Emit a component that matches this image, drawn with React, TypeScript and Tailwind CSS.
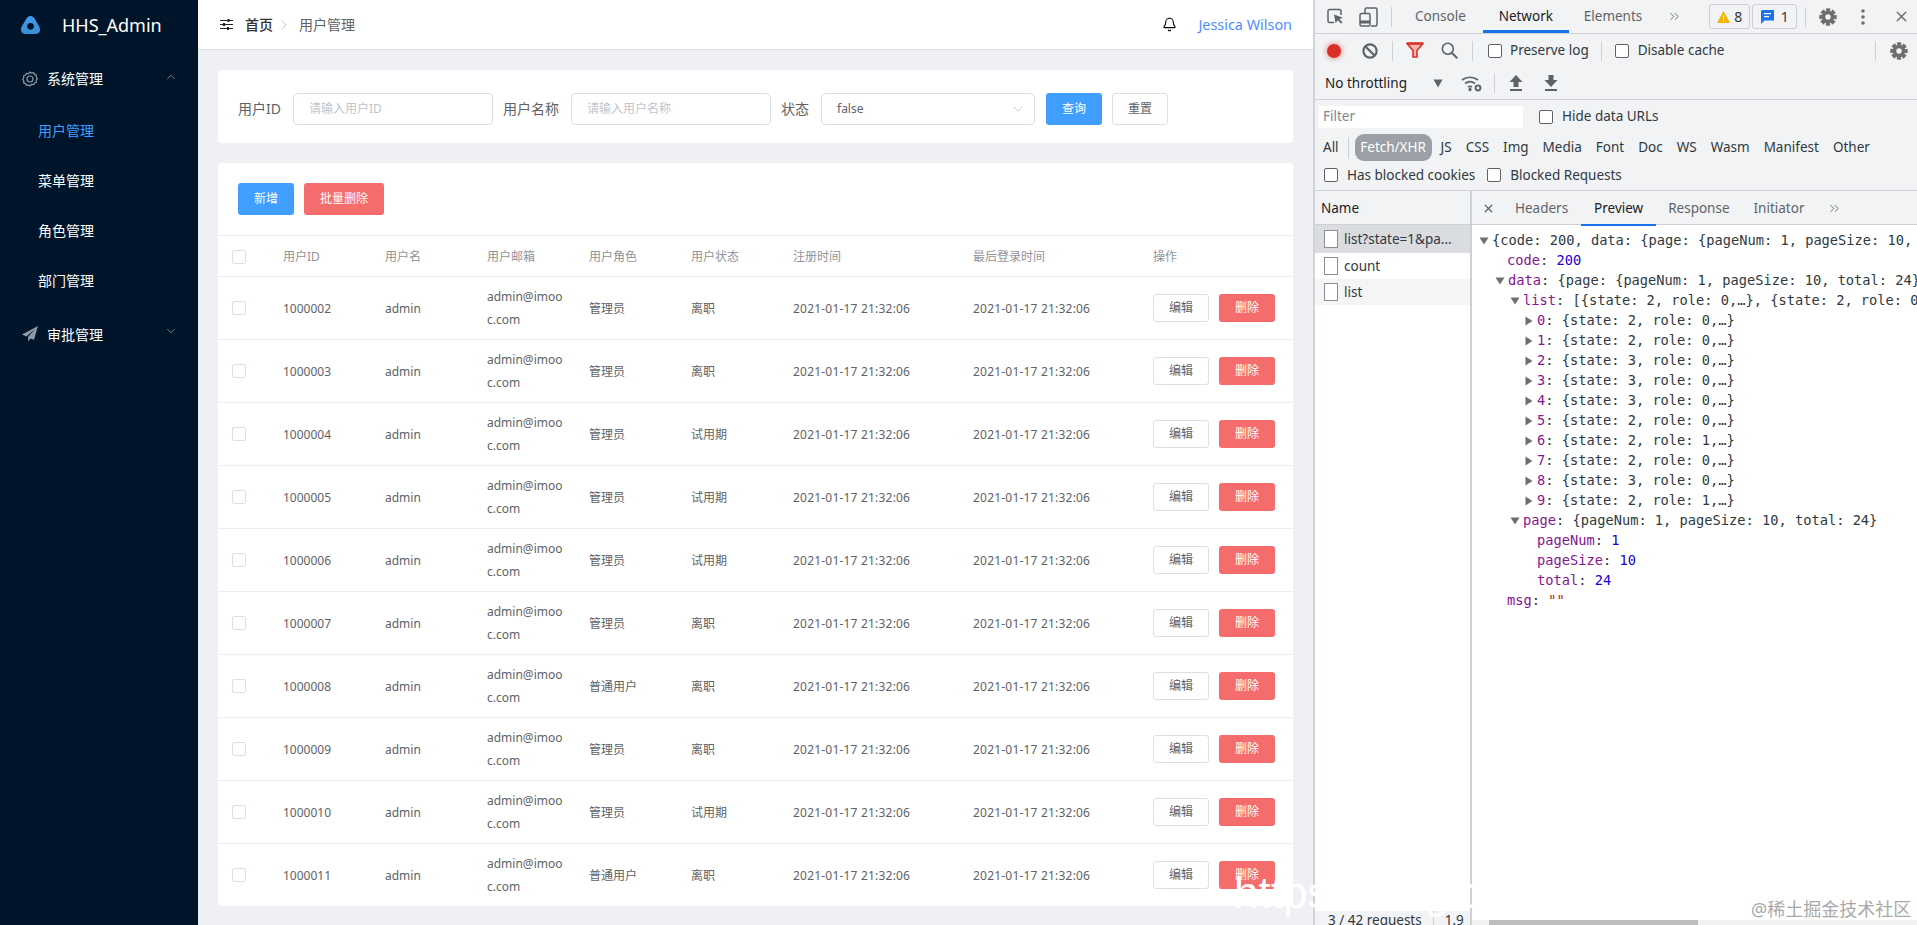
import { Bell, ChevronDown, ChevronRight, ChevronUp, ChevronsRight, X } from "lucide-react";
import type { ReactNode } from "react";

const rows = [
  { id: "1000002", role: "管理员", state: "离职" },
  { id: "1000003", role: "管理员", state: "离职" },
  { id: "1000004", role: "管理员", state: "试用期" },
  { id: "1000005", role: "管理员", state: "试用期" },
  { id: "1000006", role: "管理员", state: "试用期" },
  { id: "1000007", role: "管理员", state: "离职" },
  { id: "1000008", role: "普通用户", state: "离职" },
  { id: "1000009", role: "管理员", state: "离职" },
  { id: "1000010", role: "管理员", state: "试用期" },
  { id: "1000011", role: "普通用户", state: "离职" },
];

const listItems = [
  { k: "0", s: 2, r: 0 },
  { k: "1", s: 2, r: 0 },
  { k: "2", s: 3, r: 0 },
  { k: "3", s: 3, r: 0 },
  { k: "4", s: 3, r: 0 },
  { k: "5", s: 2, r: 0 },
  { k: "6", s: 2, r: 1 },
  { k: "7", s: 2, r: 0 },
  { k: "8", s: 3, r: 0 },
  { k: "9", s: 2, r: 1 },
];

const tableCols = "grid grid-cols-[53px_102px_102px_102px_102px_102px_180px_180px_152px]";

function Checkbox() {
  return <span className="block h-[14px] w-[14px] rounded-[2px] border border-[#dcdfe6] bg-white" />;
}

function DevCheck({ className = "" }: { className?: string }) {
  return <span className={`block h-[14px] w-[14px] rounded-[2px] border border-[#5f6368] bg-white ${className}`} />;
}

function Sep({ className = "" }: { className?: string }) {
  return <span className={`block h-[20px] w-[1px] bg-[#cdd0d4] ${className}`} />;
}

function Tri({ open }: { open: boolean }) {
  return open ? (
    <svg width="10" height="8" viewBox="0 0 10 8" className="mr-[3px] inline-block">
      <path d="M0.5 0.5h9L5 7.5z" fill="#6e6e6e" />
    </svg>
  ) : (
    <svg width="8" height="10" viewBox="0 0 8 10" className="mr-[4px] inline-block">
      <path d="M0.5 0.5v9L7.5 5z" fill="#6e6e6e" />
    </svg>
  );
}

function Key({ children }: { children: ReactNode }) {
  return <span className="text-[#881391]">{children}</span>;
}

function Num({ children }: { children: ReactNode }) {
  return <span className="text-[#1c00cf]">{children}</span>;
}

function Logo() {
  return (
    <svg width="21" height="21" viewBox="0 0 20 20">
      <defs>
        <linearGradient id="lg" x1="0" y1="0" x2="0" y2="1">
          <stop offset="0" stopColor="#3f9cf0" />
          <stop offset="1" stopColor="#3a8fd6" />
        </linearGradient>
      </defs>
      <path
        fillRule="evenodd"
        d="M10 1c2 0 3.2 1.200 4.400 3.200l3.800 6.600c1.900 3.400.8 7.200-3.200 7.200H5c-4 0-5.100-3.800-3.200-7.200l3.800-6.600C6.800 2.200 8 1 10 1zM10 7.600a3.200 3.200 0 1 0 0 6.400 3.200 3.200 0 0 0 0-6.400z"
        fill="url(#lg)"
      />
    </svg>
  );
}

function GearFilled({ size }: { size: number }) {
  return (
    <svg width={size} height={size} viewBox="0 0 20 20" fill="none" stroke="#6e6e6e" className="block">
      <circle cx="10" cy="10" r="5" strokeWidth="4" />
      <circle cx="10" cy="10" r="8" strokeWidth="3.4" strokeDasharray="4.6 1.68" strokeDashoffset="2.3" />
    </svg>
  );
}

export default function App() {
  return (
    <div className="relative flex h-[925px] w-[1917px] overflow-hidden bg-white [font-family:'Noto_Sans','Noto_Sans_CJK_SC',sans-serif]">
      {/* Sidebar */}
      <aside className="h-full w-[198px] shrink-0 bg-[#001529] text-white">
        <div className="flex h-[50px] items-center pl-[20px]">
          <Logo />
          <span className="ml-[21px] text-[18px] leading-none">HHS_Admin</span>
        </div>
        <div className="flex h-[55px] items-center pl-[22px] pt-[2px] text-[14px]">
          <svg width="16" height="16" viewBox="0 0 24 24" fill="none" stroke="#8c97a3" strokeWidth="1.8">
            <path d="M12 1.500l2.400 1.600 2.900-.5 1.600 2.500 2.700 1.100-.3 2.900 1.700 2.400-1.700 2.400.3 2.900-2.700 1.100-1.600 2.500-2.900-.5L12 22.500l-2.400-1.600-2.900.5-1.600-2.500-2.700-1.100.3-2.900L1 12.500l1.700-2.400-.3-2.900 2.700-1.100 1.600-2.500 2.900.5z" />
            <circle cx="12" cy="12" r="4.500" />
          </svg>
          <span className="ml-[9px]">系统管理</span>
          <ChevronUp size={14} strokeWidth={1.4} className="ml-[61px] -translate-y-[2px] text-[#8c97a3]" />
        </div>
        <div className="text-[14px]">
          <div className="flex h-[50px] items-center pl-[38px] text-[#409eff]">用户管理</div>
          <div className="flex h-[50px] items-center pl-[38px]">菜单管理</div>
          <div className="flex h-[50px] items-center pl-[38px]">角色管理</div>
          <div className="flex h-[50px] items-center pl-[38px]">部门管理</div>
        </div>
        <div className="mt-[4px] flex h-[50px] items-center pl-[22px] text-[14px]">
          <svg width="16" height="16" viewBox="0 0 16 16">
            <path d="M16 0L0 8.600l4.400 1.800L13 3.200 6 11l.3 4.600 2.300-3.200 3.400 1.400z" fill="#8f98a3" />
          </svg>
          <span className="ml-[9px]">审批管理</span>
          <ChevronDown size={14} strokeWidth={1.4} className="ml-[61px] -translate-y-[3px] text-[#8c97a3]" />
        </div>
      </aside>

      {/* Main */}
      <main className="flex h-full w-[1115px] shrink-0 flex-col bg-[#eef0f3]">
        <header className="flex h-[50px] shrink-0 items-center border-b border-[#dcdfe6] bg-white pl-[22px] pr-[21px] text-[14px]">
          <svg width="13" height="13" viewBox="0 0 13 13" fill="none" stroke="#222" strokeWidth="1.2">
            <path d="M0 2.500h13M0 6.500h13M0 10.500h13" />
            <path d="M8.500 1v3M4 5v3M8 9v3" strokeWidth="2" />
          </svg>
          <span className="ml-[12px] font-medium text-[#303133]">首页</span>
          <ChevronRight size={16} strokeWidth={1} className="ml-[3px] text-[#a8abb2]" />
          <span className="ml-[7px] text-[#606266]">用户管理</span>
          <Bell size={15} strokeWidth={1.7} className="ml-auto text-black" />
          <span className="ml-[21px] text-[14.400px] text-[#4f8dff]">Jessica Wilson</span>
        </header>

        <div className="flex h-0 grow flex-col overflow-hidden px-[20px] pt-[20px]">
          <section className="flex h-[73px] shrink-0 items-center rounded-[4px] bg-white px-[20px] pt-[4px] text-[14px] text-[#606266]">
            <span className="w-[55px]">用户ID</span>
            <div className="flex h-[32px] w-[200px] items-center rounded-[4px] border border-[#dcdfe6] pl-[15px] text-[12px] text-[#c0c4cc]">请输入用户ID</div>
            <span className="ml-[10px] w-[68px]">用户名称</span>
            <div className="flex h-[32px] w-[200px] items-center rounded-[4px] border border-[#dcdfe6] pl-[15px] text-[12px] text-[#c0c4cc]">请输入用户名称</div>
            <span className="ml-[10px] w-[40px]">状态</span>
            <div className="flex h-[32px] w-[214px] items-center justify-between rounded-[4px] border border-[#dcdfe6] pl-[15px] pr-[8px] text-[12px]">
              false
              <ChevronDown size={16} strokeWidth={1} className="text-[#b0b4bc]" />
            </div>
            <button className="ml-[11px] h-[32px] w-[56px] rounded-[3px] bg-[#409eff] text-[12px] text-white">查询</button>
            <button className="ml-[10px] h-[32px] w-[56px] rounded-[3px] border border-[#dcdfe6] bg-white text-[12px]">重置</button>
          </section>

          <section className="mt-[20px] h-[743px] shrink-0 overflow-hidden rounded-[4px] bg-white">
            <div className="flex h-[73px] items-center gap-[10px] border-b border-[#ebeef5] pb-[1px] pl-[20px]">
              <button className="h-[32px] w-[56px] rounded-[3px] bg-[#409eff] text-[12px] text-white">新增</button>
              <button className="h-[32px] w-[80px] rounded-[3px] bg-[#f56c6c] text-[12px] text-white">批量删除</button>
            </div>
            <div className={`${tableCols} h-[41px] items-center border-b border-[#ebeef5] pt-[1px] text-[12px] text-[#909399]`}>
              <div className="pl-[14px]">
                <Checkbox />
              </div>
              <div className="pl-[12px]">用户ID</div>
              <div className="pl-[12px]">用户名</div>
              <div className="pl-[12px]">用户邮箱</div>
              <div className="pl-[12px]">用户角色</div>
              <div className="pl-[12px]">用户状态</div>
              <div className="pl-[12px]">注册时间</div>
              <div className="pl-[12px]">最后登录时间</div>
              <div className="pl-[12px]">操作</div>
            </div>
            {rows.map((r) => (
              <div key={r.id} className={`${tableCols} h-[63px] items-center border-b border-[#ebeef5] text-[12px] text-[#606266]`}>
                <div className="pl-[14px]">
                  <Checkbox />
                </div>
                <div className="pl-[12px] pt-[1px]">{r.id}</div>
                <div className="pl-[12px] pt-[1px]">admin</div>
                <div className="pl-[12px] leading-[23px]">
                  admin@imoo
                  <br />
                  c.com
                </div>
                <div className="pl-[12px] pt-[1px]">{r.role}</div>
                <div className="pl-[12px] pt-[1px]">{r.state}</div>
                <div className="pl-[12px] pt-[1px] tracking-[0.2px]">2021-01-17 21:32:06</div>
                <div className="pl-[12px] pt-[1px] tracking-[0.2px]">2021-01-17 21:32:06</div>
                <div className="flex gap-[10px] pl-[12px]">
                  <button className="h-[28px] w-[56px] rounded-[3px] border border-[#dcdfe6] bg-white">编辑</button>
                  <button className="h-[28px] w-[56px] rounded-[3px] bg-[#f56c6c] text-white">删除</button>
                </div>
              </div>
            ))}
          </section>
        </div>
      </main>

      {/* Devtools */}
      <div className="flex h-full w-[604px] shrink-0 flex-col border-l-2 border-[#d0d3d7] bg-[#f1f3f4] text-[13.5px] text-[#303942]">
        <div className="flex h-[34px] shrink-0 items-center border-b border-[#cdd0d4] pl-[12px]">
          <svg width="17" height="17" viewBox="0 0 17 17" fill="none" stroke="#5f6368" strokeWidth="1.5">
            <path d="M7 14.500H2.500a1.500 1.500 0 0 1-1.500-1.500V3a1.500 1.500 0 0 1 1.500-1.500h10A1.500 1.500 0 0 1 14 3v4" />
            <path d="M7 6.500l9 3.200-3.600 1.400 3 3.500-1.400 1.200-3-3.500-2.500 2.600z" fill="#5f6368" stroke="none" />
          </svg>
          <svg width="19" height="20" viewBox="0 0 19 20" fill="none" stroke="#5f6368" strokeWidth="1.5" className="ml-[15px]">
            <path d="M6 6V2.500A1.500 1.500 0 0 1 7.500 1h9A1.500 1.500 0 0 1 18 2.500v15a1.500 1.500 0 0 1-1.500 1.500H12" />
            <rect x="1" y="6.500" width="10" height="12.500" rx="1.500" />
            <path d="M1 15h10" strokeWidth="3" />
          </svg>
          <Sep className="ml-[13px]" />
          <span className="ml-[23px] text-[#5f6368]">Console</span>
          <div className="ml-[17px] flex h-[33px] w-[86px] items-center justify-center border-b-[3px] border-[#1a73e8] pt-[2px] text-[#202124]">Network</div>
          <span className="ml-[15px] text-[#5f6368]">Elements</span>
          <ChevronsRight size={15} strokeWidth={1.4} className="ml-[25px] text-[#5f6368]" />
          <div className="ml-[27px] flex h-[25px] w-[41px] items-center justify-center gap-[4px] rounded-[3px] border border-[#cdd0d4] text-[14px]">
            <svg width="13" height="12" viewBox="0 0 13 12">
              <path d="M6.500 0L13 12H0z" fill="#f2b600" />
              <path d="M6 4h1v4.500H6zM6 9.500h1v1H6z" fill="#fff" />
            </svg>
            8
          </div>
          <div className="ml-[2px] flex h-[25px] w-[45px] items-center justify-center gap-[7px] rounded-[3px] border border-[#cdd0d4] text-[14px]">
            <svg width="13" height="14" viewBox="0 0 13 14">
              <path d="M1 0h12v10.500H3.500L0 14V1z" fill="#1a73e8" />
              <path d="M3 3h7v1.200H3zM3 6h5v1.200H3z" fill="#fff" />
            </svg>
            1
          </div>
          <Sep className="ml-[8px]" />
          <span className="ml-[13px]">
            <GearFilled size={18} />
          </span>
          <svg width="4" height="18" viewBox="0 0 4 18" className="ml-[24px]">
            <circle cx="2" cy="3" r="1.800" fill="#6e6e6e" />
            <circle cx="2" cy="9" r="1.800" fill="#6e6e6e" />
            <circle cx="2" cy="15" r="1.800" fill="#6e6e6e" />
          </svg>
          <X size={17} strokeWidth={2} className="ml-[28px] text-[#6e6e6e]" />
        </div>

        <div className="flex h-[33px] shrink-0 items-center pl-[12px]">
          <span className="block h-[14px] w-[14px] rounded-full bg-[#d93025] shadow-[0_0_4px_2px_rgba(217,48,37,0.3)]" />
          <svg width="16" height="16" viewBox="0 0 16 16" fill="none" stroke="#5f6368" strokeWidth="2.200" className="ml-[21px]">
            <circle cx="8" cy="8" r="6.600" />
            <path d="M3.500 3.500l9 9" />
          </svg>
          <Sep className="ml-[14px]" />
          <svg width="18" height="17" viewBox="0 0 18 17" fill="none" stroke="#d93025" strokeWidth="1.600" className="ml-[13px]">
            <path d="M1 1.500h16L11 8.500v6.500H7V8.500z" fill="#f4b4ae" />
            <path d="M1 1.500h16" strokeWidth="2.400" />
          </svg>
          <svg width="17" height="17" viewBox="0 0 17 17" fill="none" stroke="#5f6368" strokeWidth="1.600" className="ml-[17px]">
            <circle cx="6.800" cy="6.800" r="5.500" />
            <path d="M10.800 10.800l5.500 5.500" strokeWidth="2" />
          </svg>
          <Sep className="ml-[14px]" />
          <DevCheck className="ml-[15px]" />
          <span className="ml-[8px]">Preserve log</span>
          <Sep className="ml-[12px]" />
          <DevCheck className="ml-[13px]" />
          <span className="ml-[9px]">Disable cache</span>
          <Sep className="ml-auto" />
          <span className="ml-[14px] mr-[9px]">
            <GearFilled size={18} />
          </span>
        </div>

        <div className="flex h-[33px] shrink-0 items-center border-b border-[#cdd0d4] pl-[10px]">
          <span className="w-[108px] text-[#202124]">No throttling</span>
          <svg width="10" height="9" viewBox="0 0 10 9">
            <path d="M0.500 0.500h9L5 8.500z" fill="#5f6368" />
          </svg>
          <svg width="21" height="18" viewBox="0 0 21 18" fill="none" stroke="#5f6368" strokeWidth="1.700" className="ml-[18px]">
            <path d="M1 6a13 13 0 0 1 16 0M4 9.500a8.500 8.500 0 0 1 10 0M7 13a4 4 0 0 1 4 0" />
            <circle cx="9" cy="15.500" r="0.800" />
            <circle cx="17" cy="14" r="2.400" strokeWidth="2" />
          </svg>
          <Sep className="ml-[12px]" />
          <svg width="14" height="16" viewBox="0 0 14 16" className="ml-[14px]">
            <path d="M7 0l6.500 7H9.500v5h-5V7H.5zM1 14h12v2H1z" fill="#5f6368" />
          </svg>
          <svg width="14" height="16" viewBox="0 0 14 16" className="ml-[21px]">
            <path d="M4.500 0h5v5h4L7 12 .5 5h4zM1 14h12v2H1z" fill="#5f6368" />
          </svg>
        </div>

        <div className="flex h-[91px] shrink-0 flex-col border-b border-[#cdd0d4]">
          <div className="flex h-[30px] items-center pl-[4px] pt-[3px]">
            <div className="flex h-[22px] w-[204px] items-center bg-white pl-[4px] text-[#80868b]">Filter</div>
            <DevCheck className="ml-[16px]" />
            <span className="ml-[9px]">Hide data URLs</span>
          </div>
          <div className="mt-[4px] flex h-[27px] items-center pl-[8px]">
            <span>All</span>
            <span className="ml-[9px] block h-[22px] w-[1px] bg-[#cdd0d4]" />
            <span className="ml-[6px] flex h-[27px] w-[77px] items-center justify-center rounded-[9px] bg-[#9aa0a6] text-white">Fetch/XHR</span>
            <span className="ml-[9px]">JS</span>
            <span className="ml-[14px]">CSS</span>
            <span className="ml-[14px]">Img</span>
            <span className="ml-[14px]">Media</span>
            <span className="ml-[14px]">Font</span>
            <span className="ml-[14px]">Doc</span>
            <span className="ml-[14px]">WS</span>
            <span className="ml-[14px]">Wasm</span>
            <span className="ml-[14px]">Manifest</span>
            <span className="ml-[14px]">Other</span>
          </div>
          <div className="mt-[2px] flex h-[24px] items-center pl-[9px]">
            <DevCheck />
            <span className="ml-[9px]">Has blocked cookies</span>
            <DevCheck className="ml-[12px]" />
            <span className="ml-[9px]">Blocked Requests</span>
          </div>
        </div>

        <div className="flex h-0 grow bg-white">
          {/* Name column */}
          <div className="flex w-[157px] shrink-0 flex-col border-r-2 border-[#cdd0d4]">
            <div className="flex h-[34px] shrink-0 items-center border-b border-[#cdd0d4] bg-[#f1f3f4] pl-[6px] pt-[2px] text-[#202124]">Name</div>
            <div className="flex h-[28px] shrink-0 items-center bg-[#dadce0] pl-[9px]">
              <span className="block h-[18px] w-[14px] border border-[#8a8d91] bg-white" />
              <span className="ml-[6px] truncate">list?state=1&amp;pa...</span>
            </div>
            <div className="flex h-[26px] shrink-0 items-center pl-[9px]">
              <span className="block h-[18px] w-[14px] border border-[#8a8d91] bg-white" />
              <span className="ml-[6px]">count</span>
            </div>
            <div className="flex h-[26px] shrink-0 items-center bg-[#f5f5f5] pl-[9px]">
              <span className="block h-[18px] w-[14px] border border-[#8a8d91] bg-white" />
              <span className="ml-[6px]">list</span>
            </div>
            <div className="grow" />
            <div className="flex h-[14px] shrink-0 items-start overflow-hidden bg-[#f1f3f4] pl-[13px] leading-[18px]">
              <span className="whitespace-nowrap">3 / 42 requests</span>
              <span className="ml-[11px] block h-[14px] w-[1px] shrink-0 bg-[#cdd0d4]" />
              <span className="ml-[11px]">1.9</span>
            </div>
          </div>

          {/* Preview */}
          <div className="flex w-0 grow flex-col">
            <div className="flex h-[34px] shrink-0 items-center border-b border-[#cdd0d4] bg-[#f1f3f4] pl-[10px] pt-[2px] text-[#5f6368]">
              <X size={13} strokeWidth={2.200} className="text-[#5f6368]" />
              <span className="ml-[20px]">Headers</span>
              <div className="ml-[13px] -mb-[2px] flex h-[33px] w-[75px] items-center justify-center border-b-2 border-[#1a73e8] text-[#202124]">Preview</div>
              <span className="ml-[12px]">Response</span>
              <span className="ml-[24px]">Initiator</span>
              <ChevronsRight size={15} strokeWidth={1.4} className="ml-[23px]" />
            </div>
            <div className="h-0 grow overflow-hidden whitespace-nowrap pt-[5px] [font-family:'DejaVu_Sans_Mono',monospace] text-[13.7px] leading-[20px] text-[#303942]">
              <div className="pl-[7px]">
                <Tri open />
                {"{code: 200, data: {page: {pageNum: 1, pageSize: 10,"}
              </div>
              <div className="pl-[35px]">
                <Key>code</Key>: <Num>200</Num>
              </div>
              <div className="pl-[23px]">
                <Tri open />
                <Key>data</Key>: {"{page: {pageNum: 1, pageSize: 10, total: 24},"}
              </div>
              <div className="pl-[38px]">
                <Tri open />
                <Key>list</Key>: {"[{state: 2, role: 0,…}, {state: 2, role: 0,…},"}
              </div>
              {listItems.map((item) => (
                <div key={item.k} className="pl-[53px]">
                  <Tri open={false} />
                  <Key>{item.k}</Key>: {`{state: ${item.s}, role: ${item.r},…}`}
                </div>
              ))}
              <div className="pl-[38px]">
                <Tri open />
                <Key>page</Key>: {"{pageNum: 1, pageSize: 10, total: 24}"}
              </div>
              <div className="pl-[65px]">
                <Key>pageNum</Key>: <Num>1</Num>
              </div>
              <div className="pl-[65px]">
                <Key>pageSize</Key>: <Num>10</Num>
              </div>
              <div className="pl-[65px]">
                <Key>total</Key>: <Num>24</Num>
              </div>
              <div className="pl-[35px]">
                <Key>msg</Key>: <span className="text-[#c41a16]">""</span>
              </div>
            </div>
            <div className="h-[5px] shrink-0 bg-[#f1f1f1] pl-[17px]">
              <div className="h-[5px] w-[209px] bg-[#bdbdbd]" />
            </div>
          </div>
        </div>
      </div>

      {/* Blog watermarks pasted over the shot */}
      <span className="absolute left-[1234px] top-[868px] text-[44px] leading-[50px] text-white [font-family:'Liberation_Sans',sans-serif]">https://blog.cs</span>
      <span className="absolute left-[1751px] top-[897px] text-[18px] leading-[24px] text-[#a9a9a9]">@稀土掘金技术社区</span>
    </div>
  );
}
